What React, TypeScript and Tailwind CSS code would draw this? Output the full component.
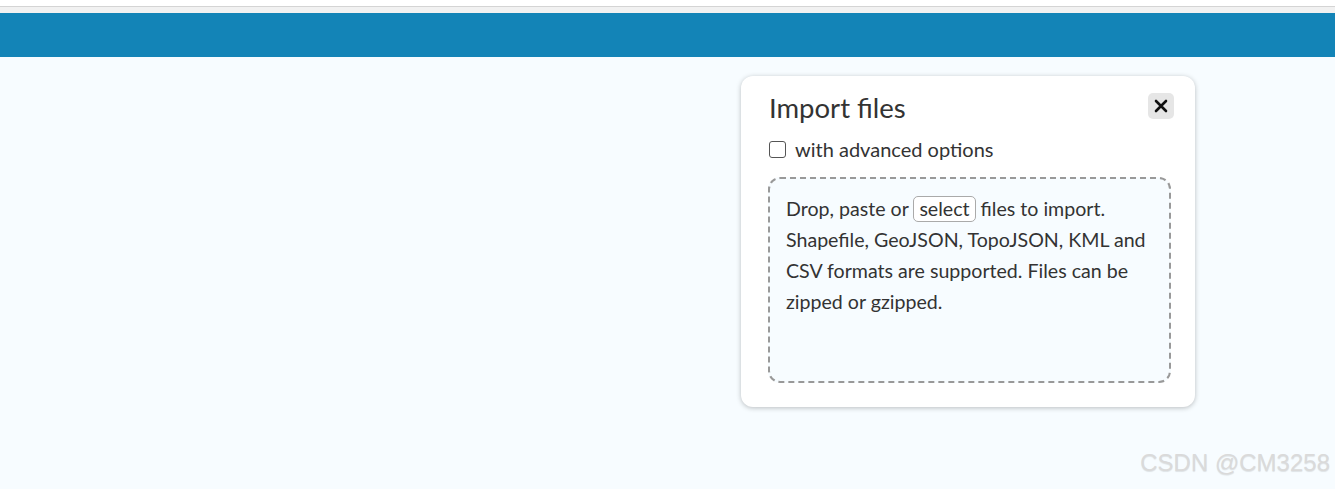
export default function App() {
  const font = { fontFamily: "Lato, 'Noto Sans', sans-serif" };
  return (
    <div className="relative h-[489px] w-full overflow-hidden bg-[#f7fcff]" style={font}>
      <div className="h-[6px] bg-white" />
      <div className="h-px bg-[#d4d4d4]" />
      <div className="h-[6px] bg-[#f1f1f1]" />
      <div className="h-[44px] bg-[#1384b7]" />

      <div className="ml-[741px] mt-[19px] h-[331px] w-[454px] rounded-[12px] bg-white pl-[28px] pr-[24px] pt-[15px] shadow-[0_1px_5px_rgba(0,0,0,0.25)]">
        <div className="flex items-start justify-between">
          <h2 className="text-[27.5px] leading-[34px] text-[#333]">Import files</h2>
          <button className="mr-[-3px] mt-[2px] flex h-[26px] w-[26px] items-center justify-center rounded-[5px] bg-[#e6e6e6]">
            <svg width="14" height="14" viewBox="0 0 14 14">
              <path d="M2 2L12 12M12 2L2 12" stroke="#111" strokeWidth="2.6" strokeLinecap="round" />
            </svg>
          </button>
        </div>
        <label className="mt-[12px] flex items-center gap-[9px] text-[20px] leading-[24px] text-[#333]">
          <span className="h-[17px] w-[17px] rounded-[3px] border-[1.5px] border-[#555] bg-white" />
          with advanced options
        </label>
        <div className="ml-[-1px] mt-[16px] h-[206px] rounded-[12px] border-2 border-dashed border-[#999] bg-[#f7fcff] px-[16px] pt-[14px] text-[19.6px] leading-[31px] text-[#333]">
          Drop, paste or{" "}
          <span className="inline-block rounded-[5px] border border-[#aaa] bg-white px-[5px] leading-[24px]">select</span>{" "}
          files to import. Shapefile, GeoJSON, TopoJSON, KML and CSV formats are supported. Files can be zipped or
          gzipped.
        </div>
      </div>

      <div
        className="absolute bottom-[8px] right-[5px] text-[24px] text-[#dadada] [text-shadow:0_1px_1px_rgba(0,0,0,0.1)]"
        style={{ fontFamily: "'Liberation Sans', Arial, sans-serif" }}
      >
        CSDN @CM3258
      </div>
    </div>
  );
}
